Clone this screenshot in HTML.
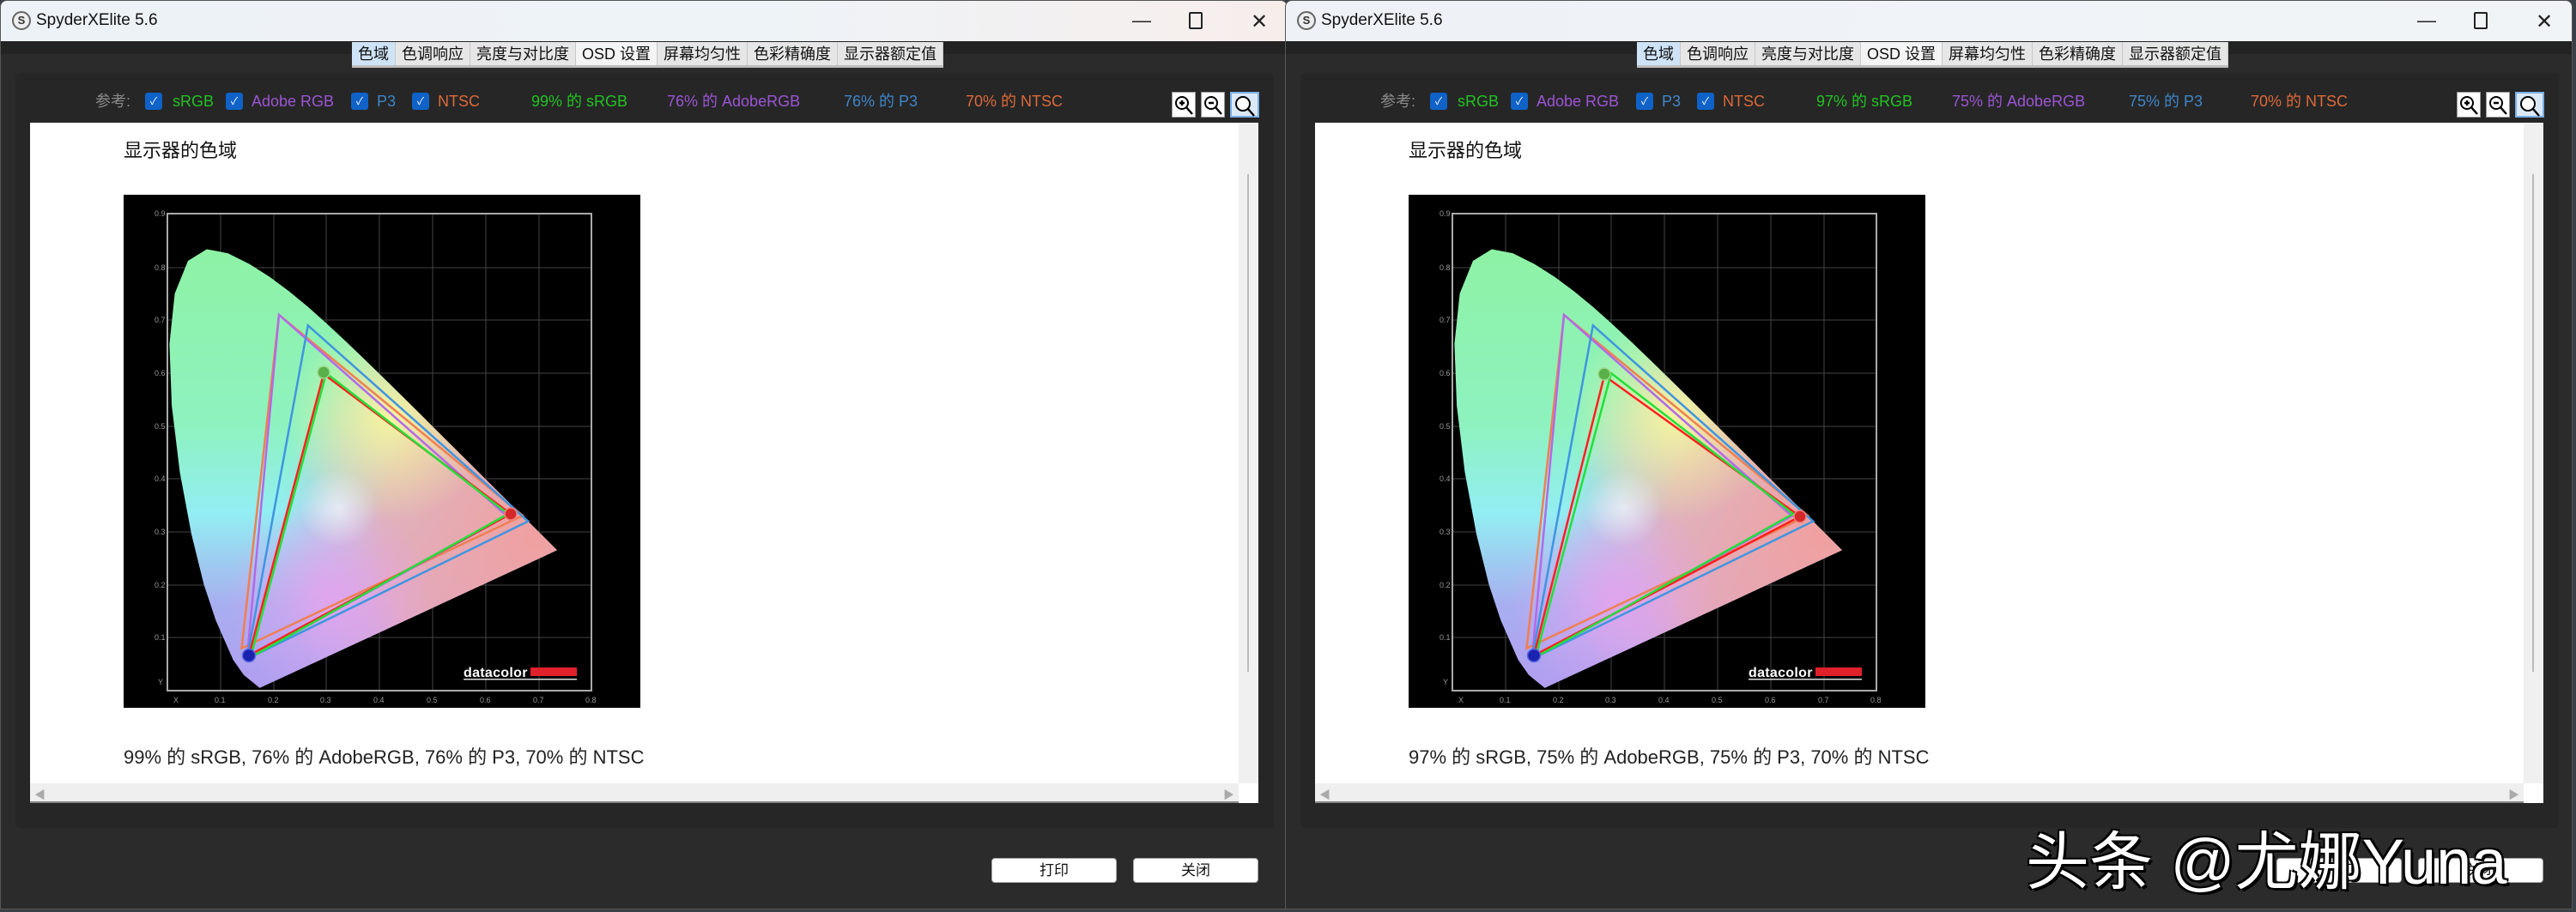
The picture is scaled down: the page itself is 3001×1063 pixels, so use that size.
<!DOCTYPE html>
<html><head><meta charset="utf-8">
<style>
*{margin:0;padding:0;box-sizing:border-box}
body{width:3001px;height:1063px;background:#3a3f48;position:relative;overflow:hidden;font-family:"Liberation Sans","Noto Sans CJK SC",sans-serif}
.win{position:absolute;top:0;width:1500px;height:1060px;background:#2b2b2b;border:1px solid #555;border-radius:8px 8px 0 0;overflow:hidden}
.title{position:absolute;left:0;top:0;width:100%;height:47px;background:linear-gradient(90deg,#edf2f7,#eef3f7 60%,#f7eeec)}
.title .t{position:absolute;left:41px;top:12px;font-size:19px;color:#111}
.title .ic{position:absolute;left:13px;top:12px;width:22px;height:22px;border:2px solid #666;border-radius:50%;font-size:13px;font-weight:bold;text-align:center;line-height:18px;color:#333;background:#eee}
.ctl{position:absolute;top:10px;font-size:22px;color:#222}
.tabstrip{position:absolute;left:0;top:47px;width:100%;height:15px;background:#232323}
.tabs{position:absolute;left:409px;top:48px;height:30px;display:flex;background:#e6e6e6;border-bottom:3px solid #bdbdbd}
.tabs div{font-size:18px;line-height:29px;padding:0 7px;border-right:1px solid #c8c8c8;color:#111;white-space:nowrap}
.tabs div.on{background:#cfe3f7}
.tabs div.w{background:#f4f4f4}
.panel{position:absolute;left:17px;top:84px;width:1466px;height:880px;background:#262626;border-radius:6px}
.ref{position:absolute;top:106px;font-size:18px;line-height:22px;white-space:nowrap}
.cb{position:absolute;top:107px;width:20px;height:20px;background:#0f62c8;border-radius:3px;color:#fff;font-size:12px;text-align:center;line-height:20px}
.zi{position:absolute;top:106px;width:28px;height:30px;background:#fff;border:1px solid #999}
.content{position:absolute;left:34px;top:142px;width:1408px;height:770px;background:#fff}
.vs{position:absolute;left:1442px;top:142px;width:23px;height:770px;background:#f0f0f0}
.vs i{position:absolute;left:10px;top:60px;width:2px;height:580px;background:#bbb}
.hs{position:absolute;left:34px;top:912px;width:1408px;height:23px;background:#efefef;border-bottom:2px solid #888}
.corner{position:absolute;left:1442px;top:912px;width:23px;height:23px;background:#fff}
.h1{position:absolute;left:143px;top:157px;font-size:22px;color:#111}
.sum{position:absolute;left:143px;top:864px;font-size:22px;color:#222}
.chart{position:absolute;left:143px;top:226px;width:602px;height:598px;background:#000}
.btn{position:absolute;top:999px;width:146px;height:29px;background:#fff;border-radius:4px;border:1px solid #aaa;font-size:17px;text-align:center;line-height:27px;color:#111}
.wm{position:absolute;left:2360px;top:945px;font-size:74px;color:#fff;font-family:"Liberation Sans","Noto Sans CJK SC",sans-serif;text-shadow:3px 3px 0 #000,-2px -2px 0 #000,2px -2px 0 #000,-2px 2px 0 #000;white-space:nowrap}
</style></head><body>

<!-- LEFT WINDOW -->
<div class="win" style="left:0">
 <div class="title"><div class="ic">S</div><div class="t">SpyderXElite 5.6</div>
  <div class="ctl" style="left:1318px">—</div>
  <div class="ctl" style="left:1384px;top:13px;width:16px;height:20px;border:2px solid #222;border-radius:2px"></div>
  <div class="ctl" style="left:1456px;font-size:24px">✕</div></div>
 <div class="tabstrip"></div>
 <div class="tabs"><div class="on">色域</div><div>色调响应</div><div>亮度与对比度</div><div class="w">OSD 设置</div><div>屏幕均匀性</div><div>色彩精确度</div><div>显示器额定值</div></div>
 <div class="panel"></div>
 <div class="ref" style="left:110px;color:#8a8a8a">参考:</div>
 <div class="cb" style="left:168px">✓</div><div class="ref" style="left:200px;color:#22c322">sRGB</div>
 <div class="cb" style="left:262px">✓</div><div class="ref" style="left:292px;color:#9b55d4">Adobe RGB</div>
 <div class="cb" style="left:408px">✓</div><div class="ref" style="left:438px;color:#3f86c8">P3</div>
 <div class="cb" style="left:479px">✓</div><div class="ref" style="left:509px;color:#dd6a3a">NTSC</div>
 <div class="ref" style="left:618px;color:#22c322">99% 的 sRGB</div>
 <div class="ref" style="left:776px;color:#9b55d4">76% 的 AdobeRGB</div>
 <div class="ref" style="left:982px;color:#3f86c8">76% 的 P3</div>
 <div class="ref" style="left:1124px;color:#dd6a3a">70% 的 NTSC</div>
 <div class="zi" style="left:1364px"><svg width="26" height="28"><circle cx="11" cy="12" r="7" fill="none" stroke="#000" stroke-width="2"/><path d="M16 17l7 8M8 12h6M11 9v6" stroke="#000" stroke-width="2.4"/></svg></div>
 <div class="zi" style="left:1398px"><svg width="26" height="28"><circle cx="11" cy="12" r="7" fill="none" stroke="#000" stroke-width="2"/><path d="M16 17l7 8M8 12h6" stroke="#000" stroke-width="2.4"/></svg></div>
 <div class="zi" style="left:1432px;width:34px;background:#dbe9f7;border:2px solid #7ab0e8"><svg width="30" height="28"><circle cx="13" cy="12" r="8" fill="#fff" stroke="#000" stroke-width="2"/><path d="M19 18l7 8" stroke="#000" stroke-width="2.4"/></svg></div>
 <div class="content"></div>
 <div class="vs"><i></i></div>
 <div class="hs"><span style="position:absolute;left:5px;top:3px;color:#aaa;font-size:13px">◀</span><span style="position:absolute;right:5px;top:3px;color:#aaa;font-size:13px">▶</span></div>
 <div class="corner"></div>
 <div class="h1">显示器的色域</div>
 <div class="chart"><svg width="602" height="598" viewBox="0 0 602 598">
  <defs>
   <clipPath id="lc"><path id="loc" d="M158.6,574.9 L140,559.7 L127.7,542.3 L107.4,496.1 L93.5,454.2 L79.1,396 L65.5,323.4 L56.1,245.8 L53.4,174 L59.6,115.1 L75,77 L96.9,63.5 L121.6,68.2 L146.6,80.8 L170.2,95.8 L192.9,112.6 L215.3,131.1 L237.4,150.9 L259.5,171.5 L281.6,192.7 L303.6,214.2 L325.5,235.7 L346.9,257 L367.7,277.8 L387.7,297.6 L406.5,316.3 L423.6,333.4 L438.5,348.2 L451.6,361.2 L462.5,371.9 L471.3,380.7 L484,393.3 L505,414.3 Z"/></clipPath>
   <linearGradient id="gv" x1="0" y1="0" x2="0" y2="1"><stop offset="0" stop-color="#8ef29c"/><stop offset=".45" stop-color="#8ef2c0"/><stop offset=".62" stop-color="#92eef2"/><stop offset=".8" stop-color="#a8aef0"/><stop offset="1" stop-color="#b49af0"/></linearGradient>
   <radialGradient id="gr" cx="480" cy="400" r="300" gradientUnits="userSpaceOnUse"><stop offset="0" stop-color="#f0a0a0" stop-opacity="1"/><stop offset=".6" stop-color="#eca8b4" stop-opacity=".85"/><stop offset="1" stop-color="#e8a8e8" stop-opacity="0"/></radialGradient>
   <radialGradient id="gy" cx="310" cy="260" r="120" gradientUnits="userSpaceOnUse"><stop offset="0" stop-color="#f6f4a0" stop-opacity="1"/><stop offset="1" stop-color="#f4f4a0" stop-opacity="0"/></radialGradient>
   <radialGradient id="gp" cx="240" cy="470" r="120" gradientUnits="userSpaceOnUse"><stop offset="0" stop-color="#e4a4ee" stop-opacity=".9"/><stop offset="1" stop-color="#e4a4ee" stop-opacity="0"/></radialGradient>
   <radialGradient id="gw" cx="250" cy="365" r="45" gradientUnits="userSpaceOnUse"><stop offset="0" stop-color="#fff" stop-opacity=".6"/><stop offset="1" stop-color="#fff" stop-opacity="0"/></radialGradient>
  </defs>
  <g stroke="#444" stroke-width="1">
   <path d="M113,22V578M175,22V578M236,22V578M298,22V578M360,22V578M422,22V578M484,22V578"/>
   <path d="M51,85H545M51,146H545M51,208H545M51,270H545M51,331H545M51,393H545M51,455H545M51,516H545"/>
  </g>
  <g clip-path="url(#lc)">
   <rect x="0" y="0" width="602" height="598" fill="url(#gv)"/>
   <rect x="0" y="0" width="602" height="598" fill="url(#gr)"/>
   <rect x="0" y="0" width="602" height="598" fill="url(#gy)"/>
   <rect x="0" y="0" width="602" height="598" fill="url(#gp)"/>
   <rect x="0" y="0" width="602" height="598" fill="url(#gw)"/>
  </g>
  <rect x="51" y="22" width="494" height="556" fill="none" stroke="#aaa" stroke-width="2"/>
  <g fill="#999" font-size="9" font-family="Liberation Sans">
   <text x="36" y="25">0.9</text><text x="36" y="88">0.8</text><text x="36" y="149">0.7</text><text x="36" y="211">0.6</text><text x="36" y="273">0.5</text><text x="36" y="334">0.4</text><text x="36" y="396">0.3</text><text x="36" y="458">0.2</text><text x="36" y="519">0.1</text><text x="40" y="571">Y</text>
   <text x="58" y="592">X</text><text x="106" y="592">0.1</text><text x="168" y="592">0.2</text><text x="229" y="592">0.3</text><text x="291" y="592">0.4</text><text x="353" y="592">0.5</text><text x="415" y="592">0.6</text><text x="477" y="592">0.7</text><text x="538" y="592">0.8</text>
  </g>
  <g fill="none" stroke-width="2.5" stroke-linejoin="miter">
   <path d="M465,374 L181,140 L137.5,528.6 Z" stroke="#f07f50"/>
   <path d="M446.5,374.4 L181,140 L143.7,541 Z" stroke="#b26ae8"/>
   <path d="M471.2,380.6 L214.8,152.3 L143.7,541 Z" stroke="#3f95e0"/>
   <path d="M451,372 L233,209 L146,537 Z" stroke="#ff2020"/>
   <path d="M448,372 L236,208 L148,539 Z" stroke="#22e03a"/>
  </g>
  <circle cx="233" cy="207" r="7" fill="#58b048" stroke="#9ed88a" stroke-width="1.5"/>
  <circle cx="451" cy="372" r="7" fill="#d52828" stroke="#f08080" stroke-width="1.5"/>
  <circle cx="146" cy="537" r="7.5" fill="#1a22b0" stroke="#5a6ae0" stroke-width="1.5"/>
  <text x="396" y="562" fill="#fff" font-size="16" font-weight="bold" font-family="Liberation Sans" letter-spacing="0.3">datacolor</text>
  <rect x="474" y="551" width="54" height="10" fill="#e0202a"/>
  <rect x="396" y="564" width="132" height="1.5" fill="#ddd"/>
 </svg></div>
 <div class="sum">99% 的 sRGB, 76% 的 AdobeRGB, 76% 的 P3, 70% 的 NTSC</div>
 <div class="btn" style="left:1154px">打印</div>
 <div class="btn" style="left:1319px">关闭</div>
</div>

<!-- RIGHT WINDOW -->
<div class="win" style="left:1497px">
 <div class="title" style="background:linear-gradient(90deg,#eef2f7,#f1f4f7)"><div class="ic">S</div><div class="t">SpyderXElite 5.6</div>
  <div class="ctl" style="left:1318px">—</div>
  <div class="ctl" style="left:1384px;top:13px;width:16px;height:20px;border:2px solid #222;border-radius:2px"></div>
  <div class="ctl" style="left:1456px;font-size:24px">✕</div></div>
 <div class="tabstrip"></div>
 <div class="tabs"><div class="on">色域</div><div>色调响应</div><div>亮度与对比度</div><div class="w">OSD 设置</div><div>屏幕均匀性</div><div>色彩精确度</div><div>显示器额定值</div></div>
 <div class="panel"></div>
 <div class="ref" style="left:110px;color:#8a8a8a">参考:</div>
 <div class="cb" style="left:168px">✓</div><div class="ref" style="left:200px;color:#22c322">sRGB</div>
 <div class="cb" style="left:262px">✓</div><div class="ref" style="left:292px;color:#9b55d4">Adobe RGB</div>
 <div class="cb" style="left:408px">✓</div><div class="ref" style="left:438px;color:#3f86c8">P3</div>
 <div class="cb" style="left:479px">✓</div><div class="ref" style="left:509px;color:#dd6a3a">NTSC</div>
 <div class="ref" style="left:618px;color:#22c322">97% 的 sRGB</div>
 <div class="ref" style="left:776px;color:#9b55d4">75% 的 AdobeRGB</div>
 <div class="ref" style="left:982px;color:#3f86c8">75% 的 P3</div>
 <div class="ref" style="left:1124px;color:#dd6a3a">70% 的 NTSC</div>
 <div class="zi" style="left:1364px"><svg width="26" height="28"><circle cx="11" cy="12" r="7" fill="none" stroke="#000" stroke-width="2"/><path d="M16 17l7 8M8 12h6M11 9v6" stroke="#000" stroke-width="2.4"/></svg></div>
 <div class="zi" style="left:1398px"><svg width="26" height="28"><circle cx="11" cy="12" r="7" fill="none" stroke="#000" stroke-width="2"/><path d="M16 17l7 8M8 12h6" stroke="#000" stroke-width="2.4"/></svg></div>
 <div class="zi" style="left:1432px;width:34px;background:#dbe9f7;border:2px solid #7ab0e8"><svg width="30" height="28"><circle cx="13" cy="12" r="8" fill="#fff" stroke="#000" stroke-width="2"/><path d="M19 18l7 8" stroke="#000" stroke-width="2.4"/></svg></div>
 <div class="content"></div>
 <div class="vs"><i></i></div>
 <div class="hs"><span style="position:absolute;left:5px;top:3px;color:#aaa;font-size:13px">◀</span><span style="position:absolute;right:5px;top:3px;color:#aaa;font-size:13px">▶</span></div>
 <div class="corner"></div>
 <div class="h1">显示器的色域</div>
 <div class="chart"><svg width="602" height="598" viewBox="0 0 602 598">
  <defs>
   <clipPath id="lc2"><path d="M158.6,574.9 L140,559.7 L127.7,542.3 L107.4,496.1 L93.5,454.2 L79.1,396 L65.5,323.4 L56.1,245.8 L53.4,174 L59.6,115.1 L75,77 L96.9,63.5 L121.6,68.2 L146.6,80.8 L170.2,95.8 L192.9,112.6 L215.3,131.1 L237.4,150.9 L259.5,171.5 L281.6,192.7 L303.6,214.2 L325.5,235.7 L346.9,257 L367.7,277.8 L387.7,297.6 L406.5,316.3 L423.6,333.4 L438.5,348.2 L451.6,361.2 L462.5,371.9 L471.3,380.7 L484,393.3 L505,414.3 Z"/></clipPath>
  </defs>
  <g stroke="#444" stroke-width="1">
   <path d="M113,22V578M175,22V578M236,22V578M298,22V578M360,22V578M422,22V578M484,22V578"/>
   <path d="M51,85H545M51,146H545M51,208H545M51,270H545M51,331H545M51,393H545M51,455H545M51,516H545"/>
  </g>
  <g clip-path="url(#lc2)">
   <rect x="0" y="0" width="602" height="598" fill="url(#gv)"/>
   <rect x="0" y="0" width="602" height="598" fill="url(#gr)"/>
   <rect x="0" y="0" width="602" height="598" fill="url(#gy)"/>
   <rect x="0" y="0" width="602" height="598" fill="url(#gp)"/>
   <rect x="0" y="0" width="602" height="598" fill="url(#gw)"/>
  </g>
  <rect x="51" y="22" width="494" height="556" fill="none" stroke="#aaa" stroke-width="2"/>
  <g fill="#999" font-size="9" font-family="Liberation Sans">
   <text x="36" y="25">0.9</text><text x="36" y="88">0.8</text><text x="36" y="149">0.7</text><text x="36" y="211">0.6</text><text x="36" y="273">0.5</text><text x="36" y="334">0.4</text><text x="36" y="396">0.3</text><text x="36" y="458">0.2</text><text x="36" y="519">0.1</text><text x="40" y="571">Y</text>
   <text x="58" y="592">X</text><text x="106" y="592">0.1</text><text x="168" y="592">0.2</text><text x="229" y="592">0.3</text><text x="291" y="592">0.4</text><text x="353" y="592">0.5</text><text x="415" y="592">0.6</text><text x="477" y="592">0.7</text><text x="538" y="592">0.8</text>
  </g>
  <g fill="none" stroke-width="2.5">
   <path d="M465,374 L181,140 L137.5,528.6 Z" stroke="#f07f50"/>
   <path d="M446.5,374.4 L181,140 L143.7,541 Z" stroke="#b26ae8"/>
   <path d="M471.2,380.6 L214.8,152.3 L143.7,541 Z" stroke="#3f95e0"/>
   <path d="M456,375 L228,211 L146,537 Z" stroke="#ff2020"/>
   <path d="M448,372 L236,208 L148,539 Z" stroke="#22e03a"/>
  </g>
  <circle cx="228" cy="209" r="7" fill="#58b048" stroke="#9ed88a" stroke-width="1.5"/>
  <circle cx="456" cy="375" r="7" fill="#d52828" stroke="#f08080" stroke-width="1.5"/>
  <circle cx="146" cy="537" r="7.5" fill="#1a22b0" stroke="#5a6ae0" stroke-width="1.5"/>
  <text x="396" y="562" fill="#fff" font-size="16" font-weight="bold" font-family="Liberation Sans" letter-spacing="0.3">datacolor</text>
  <rect x="474" y="551" width="54" height="10" fill="#e0202a"/>
  <rect x="396" y="564" width="132" height="1.5" fill="#ddd"/>
 </svg></div>
 <div class="sum">97% 的 sRGB, 75% 的 AdobeRGB, 75% 的 P3, 70% 的 NTSC</div>
 <div class="btn" style="left:1154px">打印</div>
 <div class="btn" style="left:1319px">关闭</div>
</div>

<div class="wm">头条 @尤娜Yuna</div>
</body></html>
